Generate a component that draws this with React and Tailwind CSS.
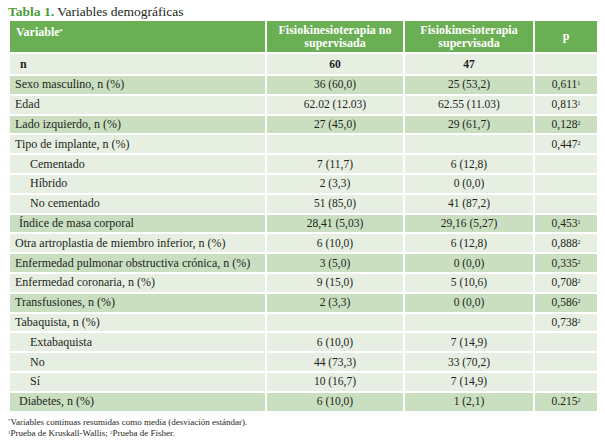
import React from 'react';

const rows = [
  { label: 'n', a: '60', b: '47', p: '', sup: '', bold: true, dark: false },
  { label: 'Sexo masculino, n (%)', a: '36 (60,0)', b: '25 (53,2)', p: '0,611', sup: '1', dark: true },
  { label: 'Edad', a: '62.02 (12.03)', b: '62.55 (11.03)', p: '0,813', sup: '1', dark: false },
  { label: 'Lado izquierdo, n (%)', a: '27 (45,0)', b: '29 (61,7)', p: '0,128', sup: '2', dark: true },
  { label: 'Tipo de implante, n (%)', a: '', b: '', p: '0,447', sup: '2', dark: false },
  { label: 'Cementado', a: '7 (11,7)', b: '6 (12,8)', p: '', sup: '', indent: true, dark: false },
  { label: 'Híbrido', a: '2 (3,3)', b: '0 (0,0)', p: '', sup: '', indent: true, dark: false },
  { label: 'No cementado', a: '51 (85,0)', b: '41 (87,2)', p: '', sup: '', indent: true, dark: false },
  { label: 'Índice de masa corporal', a: '28,41 (5,03)', b: '29,16 (5,27)', p: '0,453', sup: '1', nudge: true, dark: true },
  { label: 'Otra artroplastia de miembro inferior, n (%)', a: '6 (10,0)', b: '6 (12,8)', p: '0,888', sup: '2', dark: false },
  { label: 'Enfermedad pulmonar obstructiva crónica, n (%)', a: '3 (5,0)', b: '0 (0,0)', p: '0,335', sup: '2', dark: true },
  { label: 'Enfermedad coronaria, n (%)', a: '9 (15,0)', b: '5 (10,6)', p: '0,708', sup: '2', dark: false },
  { label: 'Transfusiones, n (%)', a: '2 (3,3)', b: '0 (0,0)', p: '0,586', sup: '2', dark: true },
  { label: 'Tabaquista, n (%)', a: '', b: '', p: '0,738', sup: '2', dark: false },
  { label: 'Extabaquista', a: '6 (10,0)', b: '7 (14,9)', p: '', sup: '', indent: true, dark: false },
  { label: 'No', a: '44 (73,3)', b: '33 (70,2)', p: '', sup: '', indent: true, dark: false },
  { label: 'Sí', a: '10 (16,7)', b: '7 (14,9)', p: '', sup: '', indent: true, dark: false },
  { label: 'Diabetes, n (%)', a: '6 (10,0)', b: '1 (2,1)', p: '0.215', sup: '2', nudge: true, dark: true },
];

export default function App() {
  return (
    <div className="w-[605px] h-[443px] bg-white px-2 pt-[2px] text-[#231f20] font-['Liberation_Serif',serif]">
      <h1 className="text-[13.5px] leading-[19px]">
        <span className="font-bold text-[#4c9a3c]">Tabla 1.</span> Variables demográficas
      </h1>
      <table className="w-[589px] table-fixed border-collapse text-[11.5px] leading-[13px]">
        <colgroup>
          <col className="w-[257px]" />
          <col className="w-[138px]" />
          <col className="w-[130px]" />
          <col className="w-[64px]" />
        </colgroup>
        <thead>
          <tr className="h-[32px] bg-[#6aaf53] text-white font-bold text-[12px]">
            <th className="border-x-2 border-white text-left align-top pt-[5px] pl-[6px] font-bold">
              Variable<sup className="text-[6px]">*</sup>
            </th>
            <th className="border-x-2 border-white align-middle font-bold leading-[13px]">
              Fisiokinesioterapia no<br />supervisada
            </th>
            <th className="border-x-2 border-white align-middle font-bold leading-[13px]">
              Fisiokinesioterapia<br />supervisada
            </th>
            <th className="border-x-2 border-white align-middle font-bold">p</th>
          </tr>
        </thead>
        <tbody>
          {rows.map((r, i) => (
            <tr
              key={i}
              className={`${r.dark ? 'bg-[#c9dfc0]' : 'bg-[#e6efe2]'} ${i === 0 ? 'h-[22px]' : 'h-[19.8px]'}`}
            >
              <td
                className={`border-2 border-white ${
                  r.bold ? 'pl-[10px] font-bold' : r.indent ? 'pl-[20px]' : r.nudge ? 'pl-[9px]' : 'pl-[5px]'
                } text-[12px]`}
              >
                {r.label}
              </td>
              <td className={`border-2 border-white text-center ${r.bold ? 'font-bold' : ''}`}>{r.a}</td>
              <td className={`border-2 border-white text-center ${r.bold ? 'font-bold' : ''}`}>{r.b}</td>
              <td className="border-2 border-white text-center">
                {r.p}
                {r.sup && <sup className="text-[6px]">{r.sup}</sup>}
              </td>
            </tr>
          ))}
        </tbody>
      </table>
      <div className="mt-[4px] text-[9px] leading-[11.5px]">
        <p>
          <sup className="text-[5px]">*</sup>Variables continuas resumidas como media (desviación estándar).
        </p>
        <p>
          <sup className="text-[5px]">1</sup>Prueba de Kruskall-Wallis; <sup className="text-[5px]">2</sup>Prueba de Fisher.
        </p>
      </div>
    </div>
  );
}
